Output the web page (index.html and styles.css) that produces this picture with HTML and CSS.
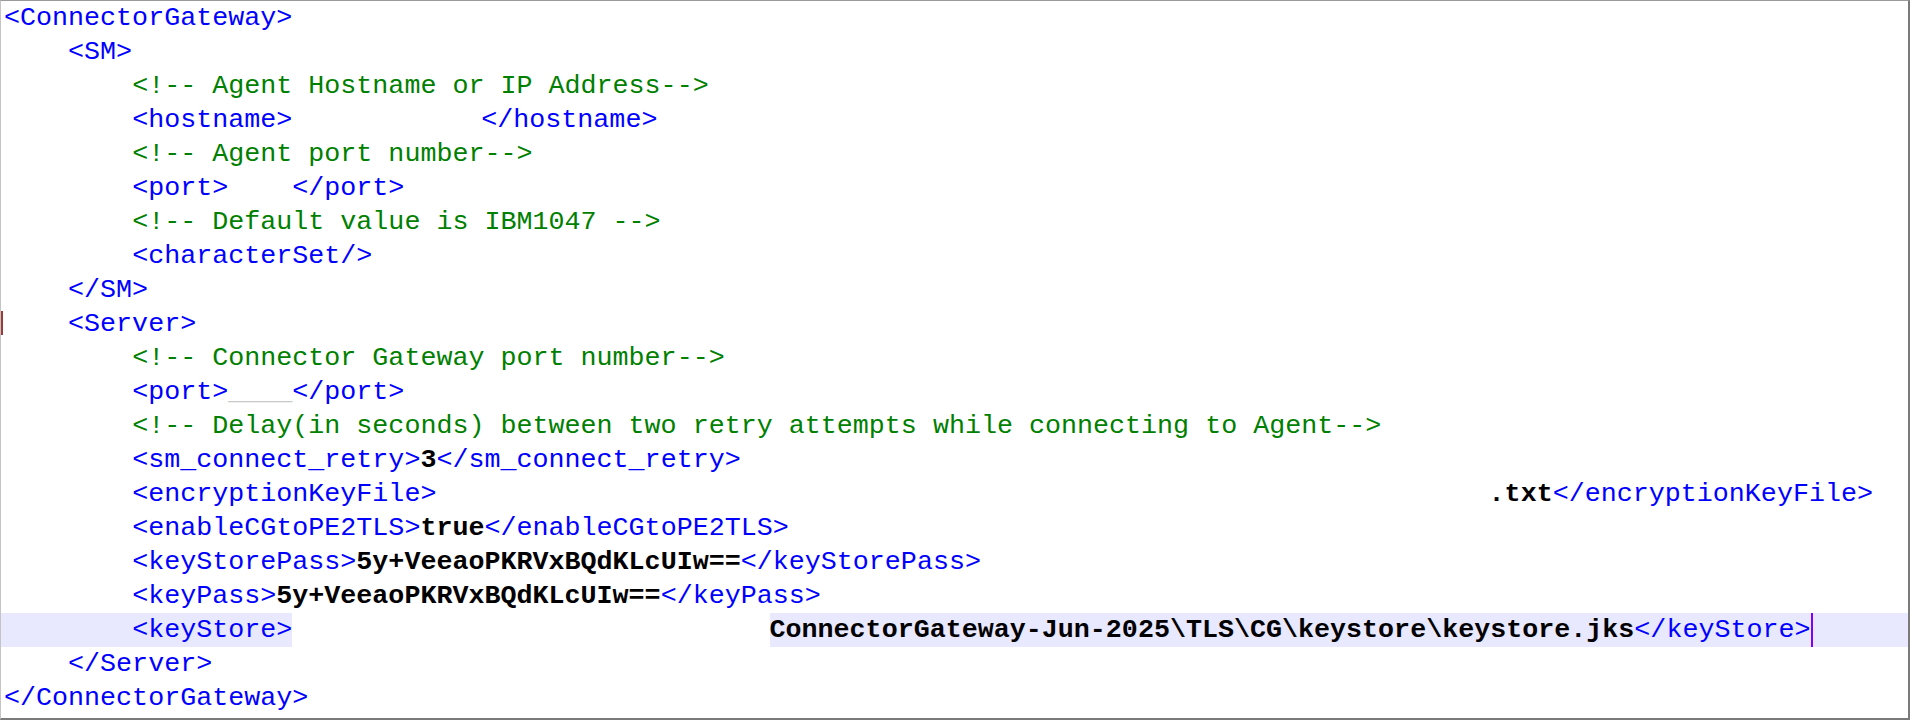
FILE: index.html
```html
<!DOCTYPE html>
<html lang="en">
<head>
    <meta charset="UTF-8">
    <title>ConnectorGateway config</title>
    <link rel="stylesheet" href="styles.css">
</head>
<body>
    <div class="editor">
        <div class="code">
<div class="line"><span class="tag">&lt;ConnectorGateway&gt;</span></div>
<div class="line">    <span class="tag">&lt;SM&gt;</span></div>
<div class="line">        <span class="comment">&lt;!-- Agent Hostname or IP Address--&gt;</span></div>
<div class="line">        <span class="tag">&lt;hostname&gt;</span><span class="gap gap-host"></span><span class="tag">&lt;/hostname&gt;</span></div>
<div class="line">        <span class="comment">&lt;!-- Agent port number--&gt;</span></div>
<div class="line">        <span class="tag">&lt;port&gt;</span>    <span class="tag">&lt;/port&gt;</span></div>
<div class="line">        <span class="comment">&lt;!-- Default value is IBM1047 --&gt;</span></div>
<div class="line">        <span class="tag">&lt;characterSet/&gt;</span></div>
<div class="line">    <span class="tag">&lt;/SM&gt;</span></div>
<div class="line">    <span class="tag">&lt;Server&gt;</span></div>
<div class="line">        <span class="comment">&lt;!-- Connector Gateway port number--&gt;</span></div>
<div class="line">        <span class="tag">&lt;port&gt;</span><span class="masked">____</span><span class="tag">&lt;/port&gt;</span></div>
<div class="line">        <span class="comment">&lt;!-- Delay(in seconds) between two retry attempts while connecting to Agent--&gt;</span></div>
<div class="line">        <span class="tag">&lt;sm_connect_retry&gt;</span><span class="value">3</span><span class="tag">&lt;/sm_connect_retry&gt;</span></div>
<div class="line">        <span class="tag">&lt;encryptionKeyFile&gt;</span><span class="gap gap-key"></span><span class="value">.txt</span><span class="tag">&lt;/encryptionKeyFile&gt;</span></div>
<div class="line">        <span class="tag">&lt;enableCGtoPE2TLS&gt;</span><span class="value">true</span><span class="tag">&lt;/enableCGtoPE2TLS&gt;</span></div>
<div class="line">        <span class="tag">&lt;keyStorePass&gt;</span><span class="value">5y+VeeaoPKRVxBQdKLcUIw==</span><span class="tag">&lt;/keyStorePass&gt;</span></div>
<div class="line">        <span class="tag">&lt;keyPass&gt;</span><span class="value">5y+VeeaoPKRVxBQdKLcUIw==</span><span class="tag">&lt;/keyPass&gt;</span></div>
<div class="line current">        <span class="tag">&lt;keyStore&gt;</span><span class="gap gap-store"></span><span class="value">ConnectorGateway-Jun-2025\TLS\CG\keystore\keystore.jks</span><span class="tag">&lt;/keyStore&gt;</span><span class="caret"></span></div>
<div class="line">    <span class="tag">&lt;/Server&gt;</span></div>
<div class="line"><span class="tag">&lt;/ConnectorGateway&gt;</span></div>
        </div>
    </div>
</body>
</html>
```

FILE: styles.css
```css
* {
    margin: 0;
    padding: 0;
    box-sizing: border-box;
}

body {
    background: #ffffff;
}

/* Editor frame */
.editor {
    position: relative;
    width: 1910px;
    height: 720px;
    border-top: 1px solid #9a9a9a;
    border-left: 1px solid #c4c4c4;
    border-right: 2px solid #7a7a7a;
    border-bottom: 2px solid #7a7a7a;
    overflow: hidden;
}

/* small change marker on the margin */
.editor::before {
    content: "";
    position: absolute;
    left: 0;
    top: 310px;
    width: 2px;
    height: 24px;
    background: #9c3a3a;
}

.code {
    font-family: "Liberation Mono", "Courier New", monospace;
    font-size: 26.7px;
    line-height: 34px;
}

.line {
    white-space: pre;
    height: 34px;
    padding-left: 3px;
}

.line.current {
    background: #e8e8ff;
}

.tag {
    color: #0000ff;
}

.comment {
    color: #008000;
}

.value {
    color: #000000;
    font-weight: bold;
}

.masked {
    color: #c8c8c8;
}

/* redacted stretches */
.gap {
    display: inline-block;
    height: 34px;
    vertical-align: top;
    background: #ffffff;
}

.gap-host {
    width: 11.8ch;
}

.gap-key {
    width: 65.7ch;
}

.gap-store {
    width: 29.8ch;
}

.caret {
    display: inline-block;
    width: 0;
    height: 34px;
    vertical-align: top;
    border-left: 2px solid #8000ff;
}
```
